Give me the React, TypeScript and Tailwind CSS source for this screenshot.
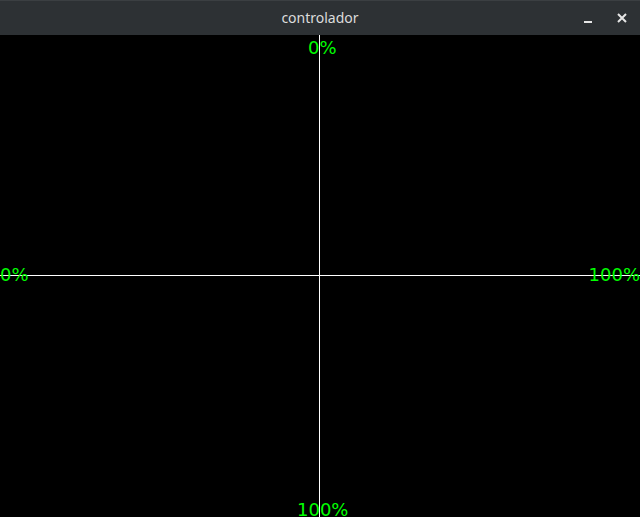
export default function App() {
  const label = "absolute leading-none text-[18px] text-[#00ff00] whitespace-nowrap";
  return (
    <div className="w-[640px] h-[517px] flex flex-col bg-black overflow-hidden">
      <div className="h-[35px] shrink-0 relative flex items-center justify-center bg-[#2d3134] border-t border-[#3b3f42] font-['Noto_Sans',sans-serif]">
        <span className="text-[14px] text-[#dcdcdc] leading-none -mt-[1px]">controlador</span>
        <div className="absolute right-0 top-0 h-full flex items-center">
          <button className="w-[34px] h-full flex items-center justify-center">
            <span className="block w-[8px] h-[2px] bg-[#e6e6e6] mt-[7px]" />
          </button>
          <button className="w-[34px] h-full flex items-center justify-center mr-[1px]">
            <svg width="10" height="10" viewBox="0 0 10 10" className="-mt-[1px]">
              <path d="M1 1 L9 9 M9 1 L1 9" stroke="#e6e6e6" strokeWidth="2" />
            </svg>
          </button>
        </div>
      </div>
      <div className="relative flex-1 font-['DejaVu_Sans',sans-serif]">
        <div className="absolute left-[319px] top-0 w-px h-full bg-white" />
        <div className="absolute top-[240px] left-0 h-px w-full bg-white" />
        <span className={`${label} left-[308px] top-[4px]`}>0%</span>
        <span className={`${label} left-[297px] top-[466px]`}>100%</span>
        <span className={`${label} left-0 top-[231px]`}>0%</span>
        <span className={`${label} right-0 top-[231px]`}>100%</span>
      </div>
    </div>
  );
}
